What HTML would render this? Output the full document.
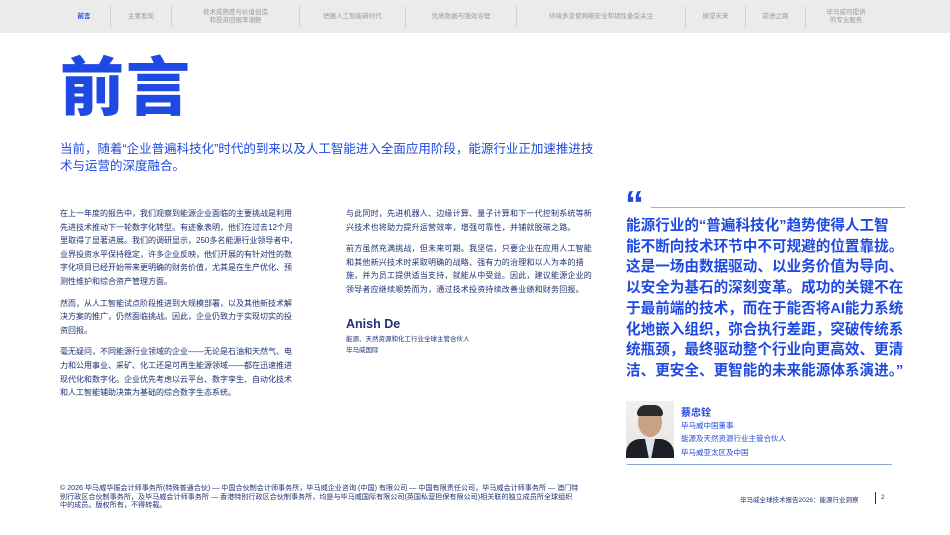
<!DOCTYPE html>
<html><head><meta charset="utf-8"><style>
*{margin:0;padding:0;box-sizing:border-box}
body{width:950px;height:535px;background:#fff;font-family:"Liberation Sans","Noto Sans CJK SC",sans-serif;position:relative;overflow:hidden;color:#1e3175}
.nav{position:absolute;left:0;top:0;width:950px;height:33px;background:#ebebeb}
.nav div{position:absolute;top:0;height:33px;display:flex;align-items:center;justify-content:center;text-align:center;font-size:6.5px;line-height:8px;color:#9a9a9a}
.nav .sep{width:1px;height:22px;top:6px;background:#d2d2d2}
.abs{position:absolute}
.body{font-size:8px;line-height:13.6px;color:#1e3175}
.body p{margin-bottom:8px}
.q{font-size:14.6px;line-height:20.7px;font-weight:bold;color:#1e49e2;white-space:nowrap}
</style></head><body>
<div class="nav">
<div style="left:60px;width:48px;color:#1e49e2;font-weight:bold">前言</div>
<div class="sep" style="left:110px"></div>
<div style="left:111px;width:60px">主要发现</div>
<div class="sep" style="left:171px"></div>
<div style="left:172px;width:127px">技术成熟度与价值创造<br>和投资回报率潮颤</div>
<div class="sep" style="left:299px"></div>
<div style="left:300px;width:105px">把握人工智能新时代</div>
<div class="sep" style="left:405px"></div>
<div style="left:406px;width:110px">优质数据与强效治理</div>
<div class="sep" style="left:516px"></div>
<div style="left:517px;width:168px">环境多变使网络安全和韧性备受关注</div>
<div class="sep" style="left:685px"></div>
<div style="left:686px;width:59px">展望未来</div>
<div class="sep" style="left:745px"></div>
<div style="left:746px;width:59px">前进之路</div>
<div class="sep" style="left:805px"></div>
<div style="left:806px;width:80px">毕马威可提供<br>的专业服务</div>
</div>

<div class="abs" style="left:60px;top:49px;font-size:64px;line-height:78px;font-weight:900;color:#1e49e2;letter-spacing:2px">前言</div>
<div class="abs" style="left:60px;top:141px;font-size:12.5px;line-height:17px;color:#1e49e2;white-space:nowrap">当前，随着“企业普遍科技化”时代的到来以及人工智能进入全面应用阶段，能源行业正加速推进技<br>术与运营的深度融合。</div>

<div class="abs body" style="left:60px;top:207px;width:238px">
<p>在上一年度的报告中，我们观察到能源企业面临的主要挑战是利用先进技术推动下一轮数字化转型。有迹象表明，他们在过去12个月里取得了显著进展。我们的调研显示，250多名能源行业领导者中，业界投资水平保持稳定，许多企业反映，他们开展的有针对性的数字化项目已经开始带来更明确的财务价值，尤其是在生产优化、预测性维护和综合资产管理方面。</p>
<p>然而，从人工智能试点阶段推进到大规模部署，以及其他新技术解决方案的推广，仍然面临挑战。因此，企业仍致力于实现切实的投资回报。</p>
<p>毫无疑问，不同能源行业领域的企业——无论是石油和天然气、电力和公用事业、采矿、化工还是可再生能源领域——都在迅速推进现代化和数字化。企业优先考虑以云平台、数字孪生、自动化技术和人工智能辅助决策为基础的综合数字生态系统。</p>
</div>

<div class="abs body" style="left:346px;top:207px;width:250px;letter-spacing:0.2px">
<p>与此同时，先进机器人、边缘计算、量子计算和下一代控制系统等新兴技术也将助力提升运营效率，增强可靠性，并铺就脱碳之路。</p>
<p>前方虽然充满挑战，但未来可期。我坚信，只要企业在应用人工智能和其他新兴技术时采取明确的战略、强有力的治理和以人为本的措施，并为员工提供适当支持，就能从中受益。因此，建议能源企业的领导者应继续顺势而为，通过技术投资持续改善业绩和财务回报。</p>
</div>
<div class="abs" style="left:346px;top:317px;font-size:12.5px;font-weight:bold;color:#1e3175">Anish De</div>
<div class="abs" style="left:346px;top:334px;font-size:6.5px;line-height:11px;color:#1e3175">能源、天然资源和化工行业全球主管合伙人<br>毕马威国际</div>

<div class="abs" style="left:625px;top:186px;font-size:38px;line-height:38px;font-weight:900;color:#1e49e2;font-family:'Liberation Sans',sans-serif">“</div>
<div class="abs" style="left:651px;top:207px;width:254px;height:1px;background:#9aaee0"></div>
<div class="abs q" style="left:626px;top:216px">能源行业的“普遍科技化”趋势使得人工智<br>能不断向技术环节中不可规避的位置靠拢。<br>这是一场由数据驱动、以业务价值为导向、<br>以安全为基石的深刻变革。成功的关键不在<br>于最前端的技术，而在于能否将AI能力系统<br>化地嵌入组织，弥合执行差距，突破传统系<br>统瓶颈，最终驱动整个行业向更高效、更清<br>洁、更安全、更智能的未来能源体系演进。”</div>

<div class="abs" style="left:626px;top:401px;width:48px;height:57px;background:linear-gradient(#f0f0ee,#e4e4e2);overflow:hidden">
<div class="abs" style="left:12px;top:6px;width:24px;height:30px;border-radius:50%;background:#c9a186"></div>
<div class="abs" style="left:11px;top:4px;width:26px;height:11px;border-radius:12px 12px 3px 3px;background:#2a2a2a"></div>
<div class="abs" style="left:0;top:38px;width:48px;height:22px;border-radius:14px 14px 0 0;background:#1d1f26"></div>
<div class="abs" style="left:19px;top:38px;width:10px;height:20px;background:#dde3ea;clip-path:polygon(0 0,100% 0,60% 100%,40% 100%)"></div>
</div>
<div class="abs" style="left:681px;top:404px;font-size:10px;font-weight:bold;color:#1e49e2">蔡忠铨</div>
<div class="abs" style="left:681px;top:419px;font-size:7.5px;line-height:13.4px;color:#1e49e2">毕马威中国董事<br>能源及天然资源行业主管合伙人<br>毕马威亚太区及中国</div>
<div class="abs" style="left:627px;top:464px;width:265px;height:1px;background:#8fa3d4"></div>

<div class="abs" style="left:60px;top:484px;font-size:7.1px;line-height:8.6px;color:#1e3175;white-space:nowrap">© 2026 毕马威华振会计师事务所(特殊普通合伙) — 中国合伙制会计师事务所，毕马威企业咨询 (中国) 有限公司 — 中国有限责任公司，毕马威会计师事务所 — 澳门特<br>别行政区合伙制事务所，及毕马威会计师事务所 — 香港特别行政区合伙制事务所，均是与毕马威国际有限公司(英国私营担保有限公司)相关联的独立成员所全球组织<br>中的成员。版权所有，不得转载。</div>
<div class="abs" style="left:740px;top:494px;font-size:6.5px;color:#1e3175">毕马威全球技术报告2026：能源行业洞察</div>
<div class="abs" style="left:875px;top:492px;width:1px;height:12px;background:#1e3175"></div>
<div class="abs" style="left:881px;top:494px;font-size:6.5px;color:#1e3175">2</div>
</body></html>
